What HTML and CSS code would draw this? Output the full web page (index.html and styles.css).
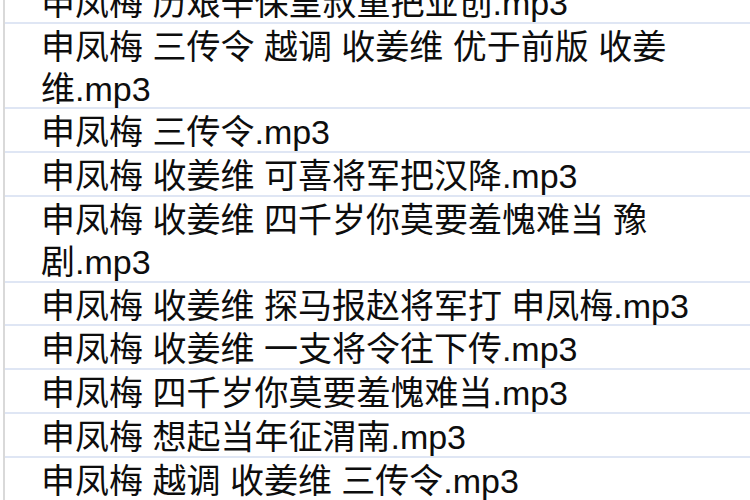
FILE: index.html
```html
<!DOCTYPE html>
<html lang="zh">
<head>
<meta charset="utf-8">
<link rel="stylesheet" href="styles.css">
</head>
<body>
<ul class="list">
  <li class="row"><span class="name">申凤梅 历艰辛保皇叔重把业创.mp3</span></li>
  <li class="row"><span class="name">申凤梅 三传令 越调 收姜维 优于前版 收姜维.mp3</span></li>
  <li class="row"><span class="name">申凤梅 三传令.mp3</span></li>
  <li class="row"><span class="name">申凤梅 收姜维 可喜将军把汉降.mp3</span></li>
  <li class="row"><span class="name">申凤梅 收姜维 四千岁你莫要羞愧难当 豫剧.mp3</span></li>
  <li class="row"><span class="name">申凤梅 收姜维 探马报赵将军打 申凤梅.mp3</span></li>
  <li class="row"><span class="name">申凤梅 收姜维 一支将令往下传.mp3</span></li>
  <li class="row"><span class="name">申凤梅 四千岁你莫要羞愧难当.mp3</span></li>
  <li class="row"><span class="name">申凤梅 想起当年征渭南.mp3</span></li>
  <li class="row"><span class="name">申凤梅 越调 收姜维 三传令.mp3</span></li>
</ul>
</body>
</html>
```
FILE: styles.css
```css
html, body {
  margin: 0;
  padding: 0;
  background: #ffffff;
  overflow: hidden;
}
.list {
  list-style: none;
  margin: -20px 0 0 3px;
  padding: 0;
  border-left: 2px solid #d9d9d9;
  width: 745px;
}
.row {
  font-family: "Liberation Sans", "Noto Sans CJK SC", sans-serif;
  font-size: 34px;
  line-height: 41.8px;
  color: #0d0d0d;
  padding: 0 26px 0 36px;
  border-bottom: 2px solid #dfe6f4;
}
.name {
  line-height: 34px;
  vertical-align: -3px;
}
```
